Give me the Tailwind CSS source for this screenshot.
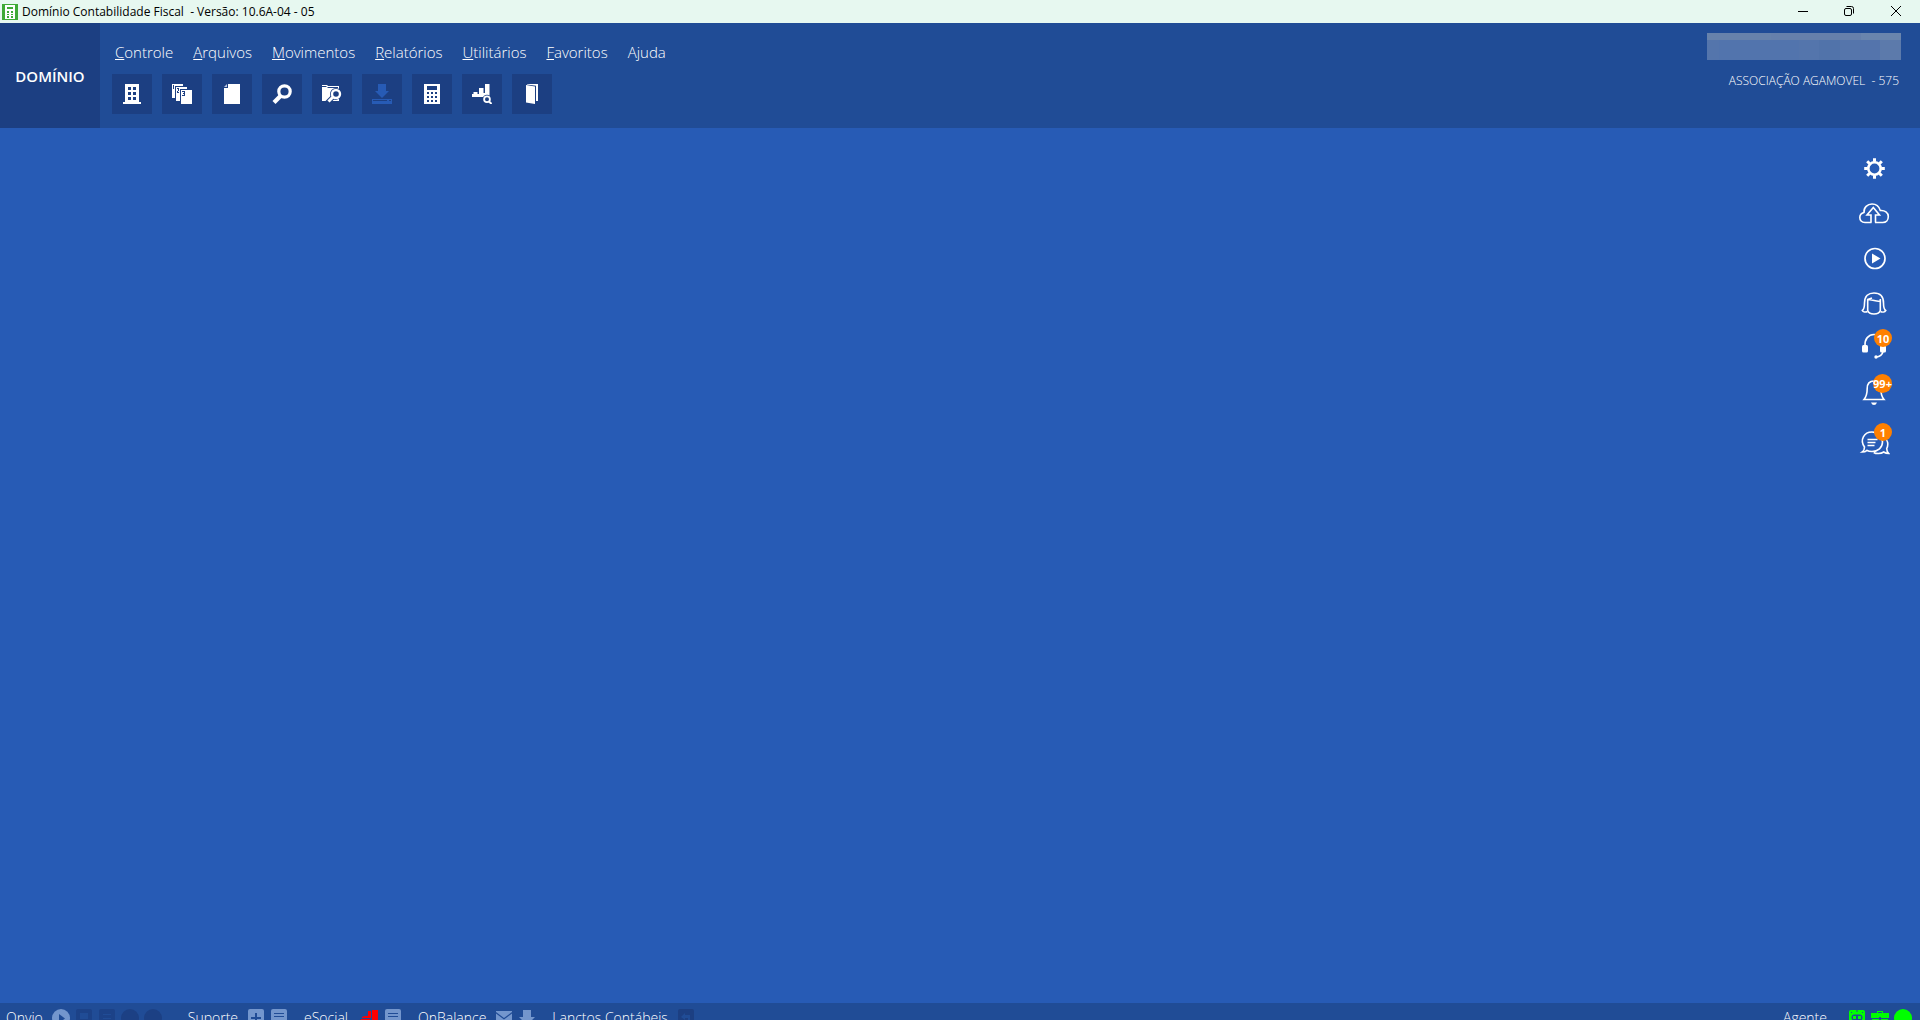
<!DOCTYPE html>
<html lang="pt-BR">
<head>
    <meta charset="utf-8" />
    <meta name="viewport" content="width=device-width, initial-scale=1.0" />
    <title>Domínio Contabilidade Fiscal</title>
    <script src="https://cdn.jsdelivr.net/npm/@tailwindcss/browser@4"></script>
</head>
<body class="h-screen flex flex-col overflow-hidden bg-[#275bb5] text-white font-['Open_Sans','Noto_Sans',sans-serif]">

    <!-- Title bar -->
    <div class="h-[23px] shrink-0 flex items-center bg-[#e7f8f0] text-black text-xs pl-0.5">
        <svg class="w-4 h-4 mr-1" viewBox="0 0 16 16" shape-rendering="crispEdges">
            <rect width="16" height="16" fill="#3faa36" />
            <path fill="#fff" d="M3 1h10v14H3z" />
            <path fill="#3faa36" d="M5 3h6v2H5zM5 7h2v2H5zM9 7h2v2H9zM5 10h2v1H5zM9 10h2v1H9zM5 12h2v2H5zM9 12h2v2H9z" />
        </svg>
        <span class="whitespace-pre text-xs">Domínio Contabilidade Fiscal  - Versão: 10.6A-04 - 05</span>
        <div class="ml-auto flex h-full pb-0.5">
            <button class="w-[46px] flex items-center justify-center" aria-label="Minimizar">
                <svg class="w-3 h-3" viewBox="0 0 12 12"><path d="M1 6.5h10" stroke="#000" /></svg>
            </button>
            <button class="w-[45px] flex items-center justify-center" aria-label="Restaurar">
                <svg class="w-3 h-3" viewBox="0 0 12 12" fill="none" stroke="#000"><rect x="1.5" y="3.5" width="7" height="7" rx="1.5" /><path d="M3.500 1.500H8.500Q10.500 1.500 10.500 3.500V8.500" /></svg>
            </button>
            <button class="w-[49px] flex items-center justify-center" aria-label="Fechar">
                <svg class="w-3 h-3" viewBox="0 0 12 12"><path d="M1 1l10 10M11 1L1 11" stroke="#000" /></svg>
            </button>
        </div>
    </div>

    <!-- Header -->
    <header class="h-[105px] shrink-0 flex bg-[#204c96]">
        <div class="w-[100px] pt-0.5 flex items-center justify-center bg-[#1c3f82] text-[15px] font-semibold">DOMÍNIO</div>
        <div class="pl-3 pt-[17px]">
            <nav class="flex gap-5 pl-[3px] text-[15px] leading-6 font-light">
                <a href="#"><u>C</u>ontrole</a>
                <a href="#"><u>A</u>rquivos</a>
                <a href="#"><u>M</u>ovimentos</a>
                <a href="#"><u>R</u>elatórios</a>
                <a href="#"><u>U</u>tilitários</a>
                <a href="#"><u>F</u>avoritos</a>
                <a href="#">A<u>j</u>uda</a>
            </nav>
            <div class="flex gap-2.5 mt-2.5">
                <button class="w-10 h-10 flex items-center justify-center bg-[#1c3f82]" aria-label="Empresas">
                    <svg class="w-5 h-5" viewBox="0 0 20 20" fill="#fff" shape-rendering="crispEdges"><path fill-rule="evenodd" d="M3 0h14v18h2v2H1v-2h2zM6 3v3h3V3zM11 3v3h3V3zM6 8v3h3V8zM11 8v3h3V8zM6 13v3h3v-3zM11 13v3h3v-3z" /></svg>
                </button>
                <button class="w-10 h-10 flex items-center justify-center bg-[#1c3f82]" aria-label="Acumuladores">
                    <svg class="w-5 h-5" viewBox="0 0 20 20" shape-rendering="crispEdges">
                        <path fill="#fff" d="M0 0h11v2H3v12H0zM4 3h11v2H8v12H4zM9 6h11v14H9z" />
                        <path fill="#1c3f82" d="M1 1h1v4H1zM5 4h2v1H5zM6 5h1v2H5v2h2V8H6V6zM10 7h3v5h-3v-1h2v-1h-1V9h1V8h-2z" />
                    </svg>
                </button>
                <button class="w-10 h-10 flex items-center justify-center bg-[#1c3f82]" aria-label="Documento">
                    <svg class="w-5 h-5" viewBox="0 0 20 20"><path fill="#fff" d="M6 0h12v20H2V4h4z" /><path fill="#b9c6df" d="M2 3l3-3v3z" /></svg>
                </button>
                <button class="w-10 h-10 flex items-center justify-center bg-[#1c3f82]" aria-label="Consultar">
                    <svg class="w-5 h-5" viewBox="0 0 20 20" fill="none" stroke="#fff"><circle cx="12.500" cy="7.500" r="5.700" stroke-width="3.200" /><path d="M8.500 12L2 18.500" stroke-width="4.200" /></svg>
                </button>
                <button class="w-10 h-10 flex items-center justify-center bg-[#1c3f82]" aria-label="Pesquisar pasta">
                    <svg class="w-5 h-5" viewBox="0 0 20 20">
                        <path fill="#fff" d="M0 1h5l1 1h11v15H0V3h5l1 1h10V3H5L4 2H0z" />
                        <circle cx="14" cy="10" r="6" fill="#1c3f82" />
                        <path d="M11 13l-6 6" stroke="#1c3f82" stroke-width="5" />
                        <path d="M11 17h6v-2l-3 1z" fill="#fff" />
                        <circle cx="14" cy="10" r="4" fill="none" stroke="#fff" stroke-width="2.400" />
                        <path d="M11 13l-4.500 4.500" stroke="#fff" stroke-width="3" />
                    </svg>
                </button>
                <button class="w-10 h-10 flex items-center justify-center bg-[#1c3f82]" aria-label="Importar">
                    <svg class="w-5 h-5" viewBox="0 0 20 20" fill="#275bb5"><path d="M6 0h8v7h3l-7 7-7-7h3z" /><path fill-rule="evenodd" d="M0 15h20v5H0zM1 16v1h14v-1zM17 16v1h2v-1z" /></svg>
                </button>
                <button class="w-10 h-10 flex items-center justify-center bg-[#1c3f82]" aria-label="Calculadora">
                    <svg class="w-5 h-5" viewBox="0 0 20 20" shape-rendering="crispEdges">
                        <path fill="#fff" d="M2 0h16v20H2z" />
                        <path fill="#1c3f82" d="M5 2h10v4H5zM5 8h2v2H5zM9 8h2v2H9zM13 8h2v2h-2zM5 12h2v2H5zM9 12h2v2H9zM13 12h2v2h-2zM5 16h2v2H5zM9 16h2v2H9zM13 16h2v2h-2z" />
                    </svg>
                </button>
                <button class="w-10 h-10 flex items-center justify-center bg-[#1c3f82]" aria-label="Gráficos">
                    <svg class="w-5 h-5" viewBox="0 0 20 20">
                        <path fill="#fff" d="M0 10h1.500V8h4v2H7V4h4.500v5H13V0h4.500v13H0z" />
                        <circle cx="15" cy="15.300" r="4.500" fill="#1c3f82" />
                        <circle cx="15" cy="15.300" r="2.900" fill="none" stroke="#fff" stroke-width="1.800" />
                        <path d="M17 17.500l2.600 2.500" stroke="#fff" stroke-width="2" />
                    </svg>
                </button>
                <button class="w-10 h-10 flex items-center justify-center bg-[#1c3f82]" aria-label="Sair">
                    <svg class="w-5 h-5" viewBox="0 0 20 20" fill="#fff"><path d="M4 1l9 1.500V20l-9-1.500z" /><path d="M5 0h11v17h-2V1.800L5 .6z" /></svg>
                </button>
            </div>
        </div>
        <div class="ml-auto pt-2.5 pr-[19px] flex flex-col items-end">
            <!-- Masked user name -->
            <div class="w-[194px] h-[27px] flex flex-col">
                <div class="h-[7px] bg-[#6680ab] flex"><div class="w-16 bg-[#6782ab]"></div><div class="flex-1"></div><div class="w-10 bg-[#6a85ad]"></div></div>
                <div class="flex-1 flex bg-[#5173aa]">
                    <div class="w-3 bg-[#5475ac]"></div>
                    <div class="w-20 bg-[#5274ad]"></div>
                    <div class="w-5 bg-[#5475ac]"></div>
                    <div class="flex-1"></div>
                    <div class="w-5 bg-[#5575ab]"></div>
                    <div class="w-5 bg-[#5474ac]"></div>
                    <div class="w-[21px] bg-[#5c7aab]"></div>
                </div>
            </div>
            <div class="mt-[13px] pr-0.5 text-xs leading-4 font-light whitespace-pre">ASSOCIAÇÃO AGAMOVEL  - 575</div>
        </div>
    </header>

    <!-- Work area with the side shortcuts -->
    <main class="flex-1 min-h-0 flex justify-end pt-[17px] pr-[22px]">
        <aside class="w-12 flex flex-col">
            <button class="h-[45px] flex items-center justify-center" aria-label="Configurações">
                <svg class="w-6 h-6" viewBox="0 0 24 24" fill="none" stroke="#fff">
                    <circle cx="12.500" cy="12.500" r="6.200" stroke-width="2.600" />
                    <path stroke-width="3" d="M12.500 2.200v3.500M12.500 19.300v3.500M2.200 12.500h3.500M19.300 12.500h3.500M5.200 5.200l2.500 2.500M17.300 17.300l2.500 2.500M5.200 19.800l2.500-2.500M17.300 7.700l2.500-2.500" />
                </svg>
            </button>
            <button class="h-[45px] flex items-center justify-center" aria-label="Enviar para nuvem">
                <svg class="w-8 h-6" viewBox="0 0 32 24" fill="none" stroke="#fff" stroke-width="1.600">
                    <path d="M13.500 21.500H7C3.500 21.500 1.800 19 1.800 16.500S3.500 12.200 6 11.500C5.500 6.500 9.500 3 14 3c4.200 0 7 2.200 8.300 6.500 4.500-.5 8 2.200 8 6 0 3.700-2.300 6-5.500 6H17" />
                    <path d="M13 21.500V14H9l6.300-7.500L21.500 14h-4v7.500" />
                </svg>
            </button>
            <button class="h-[45px] flex items-center justify-center" aria-label="Vídeos">
                <svg class="w-6 h-6" viewBox="0 0 24 24"><circle cx="13" cy="12.500" r="10" fill="none" stroke="#fff" stroke-width="1.700" /><path d="M10 7.500l8.500 5-8.500 5z" fill="#fff" /></svg>
            </button>
            <button class="h-[45px] flex items-center justify-center" aria-label="Assistente">
                <svg class="w-7 h-6" viewBox="0 0 28 24" fill="none" stroke="#fff" stroke-width="1.600">
                    <path d="M7.500 20.500C5.500 21.500 3 21 2.300 19.500 4.500 18 4.500 16 4.500 12 4.500 5 8.500 2 14 2s9.500 3 9.500 10c0 4 0 6 2.200 7.500-.8 1.500-3.200 2-5.200 1" />
                    <path d="M7.700 8.500c4 0 6 1.500 12.600 2V19.500q-1 3.500-6.300 3.500t-6.300-3.500zM7.700 8.500L12 7M20.300 10.500V8" />
                </svg>
            </button>
            <button class="relative h-[45px] flex items-center justify-center pb-1" aria-label="Atendimento">
                <svg class="w-7 h-7" viewBox="0 0 28 28" fill="none" stroke="#fff">
                    <path stroke-width="1.600" d="M5 14C4.500 7 8.500 2.500 14 2.500S23.500 7 23 14M23 19.500Q22 24.500 16 25" />
                    <rect x="2" y="13" width="6" height="7.500" rx="1.500" fill="#fff" stroke="none" />
                    <rect x="20" y="13" width="6" height="7.500" rx="1.500" fill="#fff" stroke="none" />
                    <circle cx="16" cy="25" r="1.700" fill="#fff" stroke="none" />
                </svg>
                <span class="absolute left-6 top-1 w-[18px] h-[18px] rounded-full bg-[#ff8000] flex items-center justify-center text-[11px] font-bold leading-none">10</span>
            </button>
            <button class="relative h-[45px] flex items-center justify-center" aria-label="Notificações">
                <svg class="w-7 h-7" viewBox="0 0 28 28">
                    <path fill="none" stroke="#fff" stroke-width="1.600" d="M14 2C9.500 2 7.200 5 7.200 9.500 7.200 15.500 6.500 17.500 4 20.500h20c-2.500-3-3.200-5-3.200-11C20.800 5 18.500 2 14 2z" />
                    <path fill="#fff" d="M11 23.500h6q-1 2.500-3 2.500t-3-2.500z" />
                </svg>
                <span class="absolute left-[23px] top-1 w-[19px] h-[19px] rounded-full bg-[#ff8000] flex items-center justify-center text-[11px] font-bold leading-none">99+</span>
            </button>
            <button class="relative mt-1 h-[45px] flex items-center justify-center" aria-label="Mensagens">
                <svg class="w-8 h-7" viewBox="0 0 32 28" fill="none" stroke="#fff" stroke-width="1.600">
                    <path d="M6.500 19C1.500 12 6 4 14 4c6.500 0 10.500 4.500 10.500 10S20 23.500 14 23.500c-2.500 0-4-.5-5-1.200-1.500 1.300-3 1.700-4.700 1.700C5.800 23 6.500 21 6.500 19z" />
                    <path d="M25.500 8.500c4.500 3 5.200 8 3.200 12 0 2 .5 3.500 2 5-2 0-3.500-.5-5-1.500-3 2-7.500 2-10 .5" />
                    <path d="M9.500 11.500h10M9.500 14.500h8M9.500 17.500h7" />
                </svg>
                <span class="absolute left-6 top-1 w-[18px] h-[18px] rounded-full bg-[#ff8000] flex items-center justify-center text-[11px] font-bold leading-none">1</span>
            </button>
        </aside>
    </main>

    <!-- Status bar -->
    <footer class="h-[17px] shrink-0 overflow-hidden flex items-start gap-4 bg-[#204c96] pl-1.5 pr-2 pt-1.5 text-sm leading-[18px] font-light whitespace-nowrap">
        <div class="flex gap-[5px] mr-2.5">
            <span class="mr-1">Onvio</span>
            <svg class="w-[18px] h-[18px]" viewBox="0 0 18 18"><circle cx="9" cy="9" r="9" fill="#7396cd" /><path fill="#204c96" d="M7 5l6 4.500L7 14z" /></svg>
            <svg class="w-[18px] h-[18px]" viewBox="0 0 18 18"><rect x="1" width="16" height="18" rx="2" fill="#1c4288" /><path fill="#204c96" d="M5 4h8v6H5z" /></svg>
            <svg class="w-[18px] h-[18px]" viewBox="0 0 18 18"><rect x="1" width="16" height="18" rx="2" fill="#1c4288" /><path stroke="#204c96" d="M5 5.500h8M5 9.500h8" /></svg>
            <svg class="w-[18px] h-[18px]" viewBox="0 0 18 18"><circle cx="9" cy="9" r="9" fill="#1c4084" /></svg>
            <svg class="w-[18px] h-[18px]" viewBox="0 0 18 18"><circle cx="9" cy="9" r="9" fill="#1c4084" /></svg>
        </div>
        <div class="flex gap-[5px]">
            <span class="mr-1">Suporte</span>
            <svg class="w-[18px] h-[18px]" viewBox="0 0 18 18"><rect x="1" width="16" height="18" rx="2" fill="#7396cd" /><path d="M9 4v10M4 9h10" stroke="#204c96" stroke-width="2" /></svg>
            <svg class="w-[18px] h-[18px]" viewBox="0 0 18 18"><rect x="1" width="16" height="18" rx="2" fill="#7396cd" /><path stroke="#204c96" d="M4 4.500h10M4 7.500h10M4 11.500h10" /></svg>
        </div>
        <div class="flex gap-[5px]">
            <span class="mr-2">eSocial</span>
            <svg class="w-[18px] h-[18px]" viewBox="0 0 18 18" fill="#f00"><path d="M11 1h6v17h-6zM7 2h3v7H1V8l3-1h3zM0 10h9v8H0z" /></svg>
            <svg class="w-[18px] h-[18px]" viewBox="0 0 18 18"><rect x="1" width="16" height="18" rx="2" fill="#7396cd" /><path stroke="#204c96" d="M4 4.500h10M4 7.500h10M4 11.500h10" /></svg>
        </div>
        <div class="flex gap-[5px]">
            <span class="mr-1">OnBalance</span>
            <svg class="w-[18px] h-[18px]" viewBox="0 0 18 18" fill="#7396cd"><path d="M1 2h16v1L9 9 1 3zM1 4.500l8 6 8-6V15H1z" /></svg>
            <svg class="w-[18px] h-[18px]" viewBox="0 0 18 18" fill="#7396cd"><path d="M5 1h8v7h4l-8 8-8-8h4z" /></svg>
        </div>
        <div class="flex gap-[5px]">
            <span class="mr-1">Lanctos Contábeis</span>
            <svg class="w-[18px] h-[18px]" viewBox="0 0 18 18"><rect x="1" width="16" height="18" rx="2" fill="#1c3f82" /><path fill="#204c96" d="M4 8l4-4v2h5v5h-2V9H8v2z" /></svg>
        </div>
        <div class="flex gap-[5px] ml-auto">
            <span class="mr-4">Agente</span>
            <svg class="w-[18px] h-[18px]" viewBox="0 0 18 18"><rect x="1" y="1" width="16" height="16" rx="2" fill="#0f0" /><path stroke="#204c96" d="M3 3.500h1M14 3.500h1M9 1v2" /><rect x="3.500" y="5.500" width="11" height="6" rx="3" fill="#204c96" /><path fill="#0f0" d="M5 7h3v3H5zM10 7h3v3h-3z" /></svg>
            <svg class="w-[18px] h-[18px]" viewBox="0 0 18 18" fill="#0f0"><path fill-rule="evenodd" d="M6 2h6v2h6v5h-8V8H8v1H0V4h6zM7 3v1h4V3zM1 10h7v1h2v-1h7v6H1z" /></svg>
            <svg class="w-[18px] h-[18px]" viewBox="0 0 18 18"><circle cx="9" cy="9" r="9" fill="#0f0" /></svg>
        </div>
    </footer>
</body>
</html>
